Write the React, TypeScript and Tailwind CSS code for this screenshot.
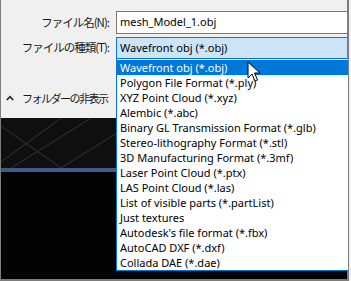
import React from 'react';

const jp = { fontFamily: '"Noto Sans CJK JP", "Noto Sans", sans-serif' };
const ui = { fontFamily: '"Noto Sans", "Noto Sans CJK JP", sans-serif' };

const formats = [
  'Wavefront obj (*.obj)',
  'Polygon File Format (*.ply)',
  'XYZ Point Cloud (*.xyz)',
  'Alembic (*.abc)',
  'Binary GL Transmission Format (*.glb)',
  'Stereo-lithography Format (*.stl)',
  '3D Manufacturing Format (*.3mf)',
  'Laser Point Cloud (*.ptx)',
  'LAS Point Cloud (*.las)',
  'List of visible parts (*.partList)',
  'Just textures',
  "Autodesk's file format (*.fbx)",
  'AutoCAD DXF (*.dxf)',
  'Collada DAE (*.dae)',
];

const Cursor = () => (
  <svg width="16" height="22" viewBox="0 0 16 22" className="absolute left-[247px] top-[61px]">
    <path d="M1 1 L1 17 L5 13 L8 20 L10.5 19 L7.5 12 L13 12 Z" fill="#fff" stroke="#000" strokeWidth="1" strokeLinejoin="round" />
  </svg>
);

const App: React.FC = () => {
  return (
    <div className="relative w-[351px] h-[281px] overflow-hidden bg-[#f0f0f0]">
      <div className="flex flex-col h-full w-[349px] border-l border-r-2 border-b-2 border-[#7d7d7d]">
        {/* File name */}
        <div className="flex items-center mt-[11px] h-[23px]">
          <div className="w-[115px] shrink-0 pr-[7px] text-right text-[11.5px] tracking-[-1px] whitespace-nowrap text-[#1a1a1a]" style={jp}>
            ファイル名(N):
          </div>
          <div className="flex-1 h-full flex items-center bg-white border border-[#7a7a7a] border-r-0 pl-[3px] text-[11px] text-black" style={ui}>
            mesh_Model_1.obj
          </div>
        </div>

        {/* File type */}
        <div className="flex items-center mt-[3px] h-[22px]">
          <div className="w-[115px] shrink-0 pr-[7px] text-right text-[11.5px] tracking-[-1px] whitespace-nowrap text-[#1a1a1a]" style={jp}>
            ファイルの種類(T):
          </div>
          <div className="flex-1 h-full flex items-center bg-[#cce4f7] border border-[#0078d7] border-r-0 pl-[3px] text-[11px] text-black" style={ui}>
            Wavefront obj (*.obj)
          </div>
        </div>

        {/* Folder toggle */}
        <div className="flex items-center mt-[29px] h-[20px] pl-[5px] gap-[8px]">
          <svg width="8" height="6" viewBox="0 0 8 6" className="shrink-0">
            <path d="M0.8 5 L4 1.6 L7.2 5" fill="none" stroke="#222" strokeWidth="1.6" />
          </svg>
          <span className="text-[11px] tracking-[-1.5px] whitespace-nowrap text-[#1a1a1a]" style={jp}>フォルダーの非表示</span>
        </div>

        {/* Dark viewport */}
        <div className="mt-[10px] flex-1 flex flex-col bg-black">
          <div className="relative h-[50px] bg-[#0f0f0f] overflow-hidden">
            <svg width="349" height="50" className="absolute inset-0">
              <path d="M0 44 L60 0 M10 50 L90 0 M60 50 L140 0 M150 50 L230 0 M0 8 L60 50" stroke="#2b2b2b" strokeWidth="1.2" fill="none" />
            </svg>
          </div>
          <div className="h-[4px] bg-[#3b5d8c]" />
          <div className="flex-1 bg-[#030303]" />
        </div>
      </div>

      {/* Dropdown list */}
      <div className="absolute left-[116px] top-[58px] w-[232px] h-[213px] bg-white border border-[#0078d7] border-r-0 pt-[1px]" style={ui}>
        {formats.map((f, i) => (
          <div
            key={f}
            className={`h-[15px] flex items-center pl-[3px] text-[11px] leading-[15px] whitespace-nowrap ${
              i === 0 ? 'bg-[#0078d7] text-white' : 'text-black'
            }`}
          >
            {f}
          </div>
        ))}
      </div>

      <Cursor />
    </div>
  );
};

export default App;
